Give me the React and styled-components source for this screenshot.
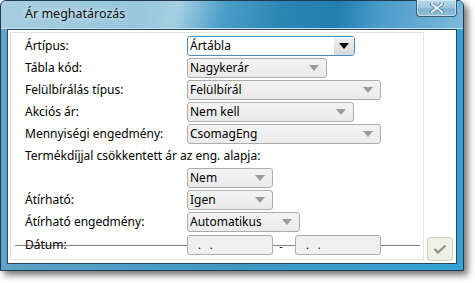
import React from "react";
import styled, { createGlobalStyle } from "styled-components";

const Global = createGlobalStyle`
  html, body { margin: 0; background: #fff; }
  body { width: 475px; height: 283px; overflow: hidden; }
`;

const Window = styled.div`
  width: 464px;
  height: 271px;
  box-sizing: border-box;
  display: flex;
  flex-direction: column;
  border: 1px solid #1d3a4f;
  border-radius: 6px 6px 0 0;
  background: linear-gradient(to right, #5ea3c8 0%, #3f98c6 50%, #33a3d5 100%);
  box-shadow: 4px 4px 7px rgba(0, 0, 0, 0.55);
  font-family: "Noto Sans", "Open Sans", sans-serif;
  font-size: 12px;
  color: #000;
`;

const TitleBar = styled.div`
  height: 27px;
  flex: none;
  display: flex;
  align-items: flex-start;
  border-radius: 5px 5px 0 0;
  border-bottom: 1px solid #c4e0ee;
  background: linear-gradient(
    105deg,
    #a6cde1 0%,
    #98c6dd 30%,
    #a4cfe3 38%,
    #4d9ec8 48%,
    #2c86b4 60%,
    #207fb0 72%,
    #4d9ccb 82%,
    #7cbadb 100%
  );
`;

const Title = styled.div`
  padding: 4px 0 0 24px;
  font-size: 12.5px;
  color: #111;
  text-shadow: 0 0 6px rgba(255, 255, 255, 0.9);
  flex: 1;
`;

const CloseButton = styled.div`
  width: 41px;
  height: 17px;
  margin: -1px 6px 0 0;
  box-sizing: border-box;
  border: 1px solid #3d5d72;
  border-top: none;
  border-radius: 0 0 4px 4px;
  background: linear-gradient(#b7d7e8 0%, #9cc6dc 50%, #7eb2cf 55%, #8fc0da 100%);
  display: flex;
  align-items: center;
  justify-content: center;
  box-shadow: inset 0 0 0 1px rgba(255, 255, 255, 0.45);
`;

const Client = styled.div`
  flex: 1;
  margin: 0 6px 6px 6px;
  border: 1px solid #2c4657;
  background: #fff;
  display: flex;
  padding: 2px 3px 3px 2px;
`;

const Panel = styled.div`
  width: 414px;
  box-sizing: border-box;
  border: 1px solid #e3e3e3;
  padding: 3px 0 0 14px;
  display: grid;
  grid-template-columns: 162px 1fr;
  grid-auto-rows: 22px;
  align-content: start;
`;

const Label = styled.div`
  height: 20px;
  line-height: 20px;
  white-space: nowrap;
  grid-column: ${(p) => (p.$wide ? "1 / -1" : "1")};
`;

const Field = styled.div`
  grid-column: 2;
`;

const Combo = styled.div`
  width: ${(p) => p.$w}px;
  height: 20px;
  box-sizing: border-box;
  border: 1px solid ${(p) => (p.$focus ? "#4a8cc4" : "#acacac")};
  border-radius: 3px;
  background: ${(p) => (p.$focus ? "#fff" : "linear-gradient(#f3f3f3, #eaeaea)")};
  display: flex;
  align-items: center;
  padding-left: 2px;
  line-height: 18px;
`;

const ComboText = styled.span`
  flex: 1;
  white-space: nowrap;
`;

const ArrowBox = styled.div`
  width: ${(p) => (p.$focus ? 20 : 24)}px;
  height: 100%;
  display: flex;
  align-items: center;
  justify-content: center;
  background: ${(p) => (p.$focus ? "linear-gradient(#f2f2f2, #d8d8d8)" : "transparent")};
`;

const Arrow = styled.div`
  width: 0;
  height: 0;
  border-left: 5px solid transparent;
  border-right: 5px solid transparent;
  border-top: 6px solid ${(p) => (p.$focus ? "#000" : "#9a9a9a")};
`;

const DateRow = styled.div`
  grid-column: 1 / -1;
  margin: 1px 0 0 -10px;
  padding-left: 10px;
  width: 395px;
  display: grid;
  grid-template-columns: 162px 86px 22px 86px;
  height: 20px;
  background: linear-gradient(#808080, #808080) no-repeat 0 10px / 100% 1px;
`;

const DateBox = styled.div`
  height: 20px;
  box-sizing: border-box;
  border: 1px solid #acacac;
  border-radius: 3px;
  background: #f0f0f0;
  padding-left: 10px;
  line-height: 18px;
  letter-spacing: 3px;
  font-size: 11px;
`;

const Dash = styled.div`
  text-align: center;
  line-height: 22px;
  font-size: 11px;
  padding-right: 6px;
`;

const DateLabel = styled.div`
  line-height: 20px;
`;

const Side = styled.div`
  display: flex;
  flex-direction: column;
  justify-content: flex-end;
  margin-left: 3px;
`;

const OkButton = styled.div`
  width: 26px;
  height: 24px;
  box-sizing: border-box;
  margin-bottom: -1px;
  border: 1px solid #cfcfc6;
  border-radius: 3px;
  background: #f1f0e6;
  display: flex;
  align-items: center;
  justify-content: center;
`;

const rows = [
  { label: "Ártípus:", value: "Ártábla", w: 168, focus: true },
  { label: "Tábla kód:", value: "Nagykerár", w: 140 },
  { label: "Felülbírálás típus:", value: "Felülbírál", w: 194 },
  { label: "Akciós ár:", value: "Nem kell", w: 167 },
  { label: "Mennyiségi engedmény:", value: "CsomagEng", w: 194 },
];

const rows2 = [
  { label: "", value: "Nem", w: 86 },
  { label: "Átírható:", value: "Igen", w: 86 },
  { label: "Átírható engedmény:", value: "Automatikus", w: 113 },
];

const ComboBox = ({ value, w, focus }) => (
  <Combo $w={w} $focus={focus}>
    <ComboText>{value}</ComboText>
    <ArrowBox $focus={focus}>
      <Arrow $focus={focus} />
    </ArrowBox>
  </Combo>
);

const renderRow = (r) => (
  <React.Fragment key={r.label + r.value}>
    <Label>{r.label}</Label>
    <Field>
      <ComboBox value={r.value} w={r.w} focus={r.focus} />
    </Field>
  </React.Fragment>
);

export default function App() {
  return (
    <>
      <Global />
      <Window>
        <TitleBar>
          <Title>Ár meghatározás</Title>
          <CloseButton>
            <svg width="14" height="10" viewBox="0 0 14 10">
              <path d="M2 1 L12 9 M12 1 L2 9" stroke="#3d6f8f" strokeWidth="3.4" strokeLinecap="square" />
              <path d="M2 1 L12 9 M12 1 L2 9" stroke="#eef7fc" strokeWidth="2" strokeLinecap="square" />
            </svg>
          </CloseButton>
        </TitleBar>
        <Client>
          <Panel>
            {rows.map(renderRow)}
            <Label $wide>Termékdíjjal csökkentett ár az eng. alapja:</Label>
            {rows2.map(renderRow)}
            <DateRow>
              <DateLabel>Dátum:</DateLabel>
              <DateBox>. .</DateBox>
              <Dash>-</Dash>
              <DateBox>. .</DateBox>
            </DateRow>
          </Panel>
          <Side>
            <OkButton>
              <svg width="14" height="10" viewBox="0 0 14 10">
                <path d="M1.5 5 L5 8.5 L12.5 1.5" fill="none" stroke="#8e8e8e" strokeWidth="2.2" />
              </svg>
            </OkButton>
          </Side>
        </Client>
      </Window>
    </>
  );
}
